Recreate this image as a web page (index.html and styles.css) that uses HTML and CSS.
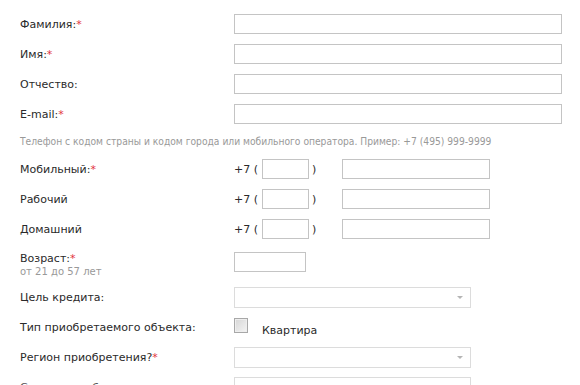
FILE: index.html
```html
<!DOCTYPE html>
<html lang="ru">
<head>
    <meta charset="UTF-8">
    <title>Заявка на кредит</title>
    <link rel="stylesheet" href="styles.css">
</head>
<body>
    <form class="credit-form">
        <div class="form-row">
            <label class="form-label">Фамилия:<span class="req">*</span></label>
            <input class="text-input wide" type="text">
        </div>
        <div class="form-row">
            <label class="form-label">Имя:<span class="req">*</span></label>
            <input class="text-input wide" type="text">
        </div>
        <div class="form-row">
            <label class="form-label">Отчество:</label>
            <input class="text-input wide" type="text">
        </div>
        <div class="form-row">
            <label class="form-label">E-mail:<span class="req">*</span></label>
            <input class="text-input wide" type="text">
        </div>

        <p class="hint">Телефон с кодом страны и кодом города или мобильного оператора. Пример: +7 (495) 999-9999</p>

        <!-- phone rows -->
        <div class="form-row">
            <label class="form-label">Мобильный:<span class="req">*</span></label>
            <div class="phone">
                <span class="phone-prefix">+7 (</span>
                <input class="text-input code" type="text">
                <span class="phone-close">)</span>
                <input class="text-input number" type="text">
            </div>
        </div>
        <div class="form-row">
            <label class="form-label">Рабочий</label>
            <div class="phone">
                <span class="phone-prefix">+7 (</span>
                <input class="text-input code" type="text">
                <span class="phone-close">)</span>
                <input class="text-input number" type="text">
            </div>
        </div>
        <div class="form-row">
            <label class="form-label">Домашний</label>
            <div class="phone">
                <span class="phone-prefix">+7 (</span>
                <input class="text-input code" type="text">
                <span class="phone-close">)</span>
                <input class="text-input number" type="text">
            </div>
        </div>

        <div class="form-row age-row">
            <label class="form-label">Возраст:<span class="req">*</span>
                <span class="sub">от 21 до 57 лет</span>
            </label>
            <input class="text-input short" type="text">
        </div>

        <div class="form-row">
            <label class="form-label">Цель кредита:</label>
            <div class="select-box"><span class="arrow"></span></div>
        </div>
        <div class="form-row">
            <label class="form-label">Тип приобретаемого объекта:</label>
            <div class="check">
                <span class="check-box"></span>
                <span class="check-text">Квартира</span>
            </div>
        </div>
        <div class="form-row">
            <label class="form-label">Регион приобретения?<span class="req">*</span></label>
            <div class="select-box"><span class="arrow"></span></div>
        </div>
        <div class="form-row last-row">
            <label class="form-label">Стоимость объекта:</label>
            <div class="select-box"></div>
        </div>
    </form>
</body>
</html>
```

FILE: styles.css
```css
/* Page */
body {
    margin: 0;
    background-color: #fff;
    font-family: "DejaVu Sans", Tahoma, sans-serif;
    font-size: 11px;
    color: #2a2a2a;
    overflow: hidden;
}

.credit-form {
    padding: 14px 0 0 20px;
}

/* Rows */
.form-row {
    display: flex;
    align-items: center;
    height: 20px;
    margin-bottom: 10px;
}

.form-label {
    width: 214px;
    flex-shrink: 0;
    white-space: nowrap;
}

.req {
    color: #e2323c;
}

.text-input {
    box-sizing: border-box;
    height: 20px;
    margin: 0;
    padding: 0 3px;
    border: 1px solid #c4c4c4;
    background-color: #fff;
}

.text-input.wide {
    width: 328px;
}

.text-input.short {
    width: 72px;
}

/* Hint line */
.hint {
    margin: 12px 0 11px;
    font-family: "DejaVu Sans Condensed", Tahoma, sans-serif;
    font-size: 10.2px;
    line-height: 12px;
    color: #999;
}

/* Phone */
.phone {
    display: flex;
    align-items: center;
}

.phone-prefix {
    width: 28px;
}

.text-input.code {
    width: 47px;
}

.phone-close {
    width: 33px;
    padding-left: 3px;
    box-sizing: border-box;
}

.text-input.number {
    width: 148px;
}

/* Age */
.age-row {
    height: 25px;
    margin-top: 13px;
    margin-bottom: 10px;
    align-items: flex-start;
}

.sub {
    display: block;
    margin-top: 1px;
    font-size: 10px;
    color: #999;
}

/* Select */
.select-box {
    position: relative;
    box-sizing: border-box;
    width: 237px;
    height: 21px;
    border: 1px solid #dcdcdc;
    background-color: #fff;
}

.arrow {
    position: absolute;
    right: 7px;
    top: 8px;
    border-left: 3px solid transparent;
    border-right: 3px solid transparent;
    border-top: 3px solid #b5b5b5;
}

/* Checkbox */
.check {
    display: flex;
    align-items: center;
}

.check-box {
    box-sizing: border-box;
    width: 14px;
    height: 15px;
    border: 1px solid #a8a8a8;
    background: linear-gradient(135deg, #d6d6d6, #f4f4f4);
    box-shadow: inset 0 0 0 1px #eee;
    margin-top: -4px;
}

.check-text {
    margin-left: 14px;
    margin-top: 6px;
}

.last-row .form-label {
    color: #555;
}
```
